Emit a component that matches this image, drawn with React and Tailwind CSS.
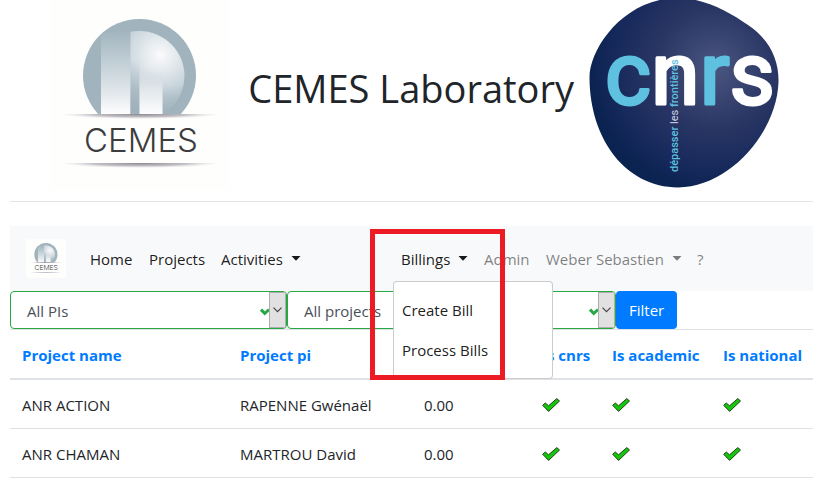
import React from "react";

const projects = [
  { name: "ANR ACTION", pi: "RAPENNE Gwénaël", amount: "0.00" },
  { name: "ANR CHAMAN", pi: "MARTROU David", amount: "0.00" },
];

function CemesLogo({ className }) {
  return (
    <svg viewBox="0 0 180 190" className={className} role="img" aria-label="CEMES logo">
      <defs>
        <radialGradient id="ball" gradientUnits="userSpaceOnUse" cx="110" cy="55" r="60">
          <stop offset="0" stopColor="#fafbfc" />
          <stop offset="0.2" stopColor="#eaeef1" />
          <stop offset="0.6" stopColor="#c6d3da" />
          <stop offset="1" stopColor="#a1b3bd" />
        </radialGradient>
        <linearGradient id="column" x1="0" y1="0" x2="0" y2="1">
          <stop offset="0" stopColor="#a3b5bf" />
          <stop offset="0.4" stopColor="#c3d0d7" />
          <stop offset="0.75" stopColor="#e3e8ec" />
          <stop offset="1" stopColor="#fdfdfe" />
        </linearGradient>
        <linearGradient id="columnShort" x1="0" y1="0" x2="0" y2="1">
          <stop offset="0" stopColor="#d5dee3" stopOpacity="0" />
          <stop offset="0.4" stopColor="#dfe5e9" />
          <stop offset="1" stopColor="#fdfdfe" />
        </linearGradient>
        <linearGradient id="gap" x1="0" y1="0" x2="0" y2="1">
          <stop offset="0" stopColor="#9fb2bc" stopOpacity="0" />
          <stop offset="1" stopColor="#9fb2bc" />
        </linearGradient>
        <radialGradient id="shadow" cx="0.5" cy="0" r="0.5" gradientTransform="scale(1 2)">
          <stop offset="0" stopColor="#88848c" />
          <stop offset="0.6" stopColor="#aaa6ad" stopOpacity="0.7" />
          <stop offset="1" stopColor="#d8d4d8" stopOpacity="0" />
        </radialGradient>
        <clipPath id="dome">
          <rect x="0" y="0" width="180" height="114" />
        </clipPath>
      </defs>
      <rect width="180" height="190" fill="#fefefd" />
      <g clipPath="url(#dome)">
        <circle cx="89.500" cy="75.500" r="56.500" fill="#a1b3bd" />
        <circle cx="89.500" cy="76" r="45" fill="url(#ball)" />
        <path d="M51 34 Q64 30 80.500 32 V114 H51Z" fill="url(#column)" />
        <rect x="80.500" y="60" width="9" height="54" fill="url(#gap)" />
        <path d="M112.500 85 H134 V96 Q127 108 118 114 H112.500Z" fill="url(#gap)" opacity="0.7" />
        <rect x="89.500" y="70" width="23" height="44" fill="url(#columnShort)" />
      </g>
      <rect x="10" y="114" width="160" height="5" fill="url(#shadow)" />
      <text x="34" y="152" fontFamily="Inter, 'Liberation Sans', sans-serif" fontWeight="300" fontSize="33" fill="#3c3c3e">
        CEMES
      </text>
      <rect x="10" y="163" width="160" height="5" fill="url(#shadow)" />
    </svg>
  );
}

function CnrsLogo({ className }) {
  return (
    <svg viewBox="0 0 210 200" className={className} role="img" aria-label="CNRS logo">
      <defs>
        <radialGradient id="navy" gradientUnits="userSpaceOnUse" cx="135" cy="68" r="125">
          <stop offset="0" stopColor="#4b5680" />
          <stop offset="0.45" stopColor="#2b3765" />
          <stop offset="0.85" stopColor="#14285a" />
          <stop offset="1" stopColor="#0b2350" />
        </radialGradient>
      </defs>
      <path
        d="M9.500 78 C9 50 42 0 95 -2 C122 -3 148 11 168 25 C190 40 199 60 198.500 82 C197 132 150 187 98 187.500 C46 187 10 140 9.500 78Z"
        fill="url(#navy)"
      />
      <text
        x="25"
        y="104"
        fontFamily="Roboto, 'Liberation Sans', sans-serif"
        fontSize="88"
        strokeWidth="3"
        strokeLinejoin="round"
        fill="#5fc1e0"
        stroke="#5fc1e0"
      >
        c<tspan fill="#ffffff" stroke="#ffffff">n</tspan>r<tspan fill="#ffffff" stroke="#ffffff">s</tspan>
      </text>
      <text
        transform="translate(98 172) rotate(-90)"
        fontFamily="Roboto, 'Liberation Sans', sans-serif"
        fontSize="11"
        fontWeight="500"
        fill="#5fc1e0"
      >
        dépasser <tspan fill="#d3d4ea" fontWeight="400">les</tspan> frontières
      </text>
    </svg>
  );
}

function Caret() {
  return (
    <svg viewBox="0 0 10 5" className="ml-2 h-[5px] w-[10px]" fill="currentColor" aria-hidden="true">
      <path d="M0.500 0H9.500L5 4.800Z" />
    </svg>
  );
}

function FilterSelect({ label, className }) {
  return (
    <div className={`flex h-[38px] items-center overflow-hidden rounded border border-[#28a745] bg-white ${className}`}>
      <select aria-label={label} className="h-full min-w-0 flex-1 appearance-none bg-transparent pt-[2px] pl-4 text-[15px] text-[#495057] outline-none">
        <option>{label}</option>
      </select>
      <svg viewBox="0 0 9 8" className="mt-1 h-2 w-[9px]" aria-hidden="true">
        <path d="M1 1.500L4.800 5.500L9 1.500" fill="none" stroke="#28a745" strokeWidth="3" />
      </svg>
      <span className="flex h-full w-[17px] items-center justify-center border border-[#adadad] bg-[#e1e1e1]">
        <svg viewBox="0 0 9 6" className="h-[6px] w-[9px]" aria-hidden="true">
          <path d="M0.500 0.700L4.500 4.700L8.500 0.700" fill="none" stroke="#444" strokeWidth="1.200" />
        </svg>
      </span>
    </div>
  );
}

function Tick() {
  return (
    <svg viewBox="0 0 18 14" className="h-[14px] w-[18px]" role="img" aria-label="Yes">
      <path d="M0.700 7.300L3.300 5L6.500 7.800L14.800 0.600L17.500 3L6.600 13.400Z" fill="#16c60c" stroke="#22401a" strokeWidth="1" strokeLinejoin="round" />
    </svg>
  );
}

export default function App() {
  const link = "flex h-10 items-center px-2 whitespace-nowrap";
  const th = "border-t border-b-2 border-[#dee2e6] px-3 pt-[13px] pb-[11px] text-left font-bold whitespace-nowrap text-[#007bff]";
  const td = "border-b border-[#dee2e6] px-3 pt-[13px] pb-[11px] whitespace-nowrap";
  return (
    <div className="bg-white pr-[6px] pl-[10px] font-['Open_Sans','Noto_Sans',sans-serif] text-[15px] leading-6 text-[#212529]">
      <header className="flex items-start border-b border-[#e5e5e5] pb-px pl-10">
        <CemesLogo className="h-[190px] w-[180px] shrink-0" />
        <h1 className="w-[350px] shrink-0 pt-16 pr-[6px] text-right text-[38px] leading-[48px] whitespace-nowrap">CEMES Laboratory</h1>
        <CnrsLogo className="h-[200px] w-[210px] shrink-0" />
      </header>

      <nav className="mt-6 flex h-[65px] items-center bg-[#f8f9fa] pl-4">
        <a href="#home" className="mr-4 bg-[#fefefd]">
          <CemesLogo className="h-[39px] w-10" />
        </a>
        <ul className="flex text-black/90">
          <li className="w-[59px]"><a href="#home" className={link}>Home</a></li>
          <li className="w-[72px]"><a href="#projects" className={link}>Projects</a></li>
          <li className="w-[180px]"><button className={link}>Activities<Caret /></button></li>
          <li className="relative w-[83px]">
            <button className={link} aria-expanded="true">Billings<Caret /></button>
            <div className="absolute top-[42px] left-0 z-10 w-40 rounded border border-black/20 bg-white py-2">
              <a href="#create" className={link}>Create Bill</a>
              <a href="#process" className={link}>Process Bills</a>
            </div>
            <div className="pointer-events-none absolute -top-[10px] -left-[23px] z-20 h-[151px] w-[135px] border-[5px] border-[#ed1c24]" />
          </li>
          <li className="w-[62px] text-black/50"><a href="#admin" className={link}>Admin</a></li>
          <li className="w-[151px] text-black/50"><button className={link}>Weber Sebastien<Caret /></button></li>
          <li className="text-black/50"><a href="#help" className={link}>?</a></li>
        </ul>
      </nav>

      <form className="flex" onSubmit={(e) => e.preventDefault()}>
        <FilterSelect label="All PIs" className="w-[277px]" />
        <FilterSelect label="All projects" className="w-[329px]" />
        <button className="h-[38px] rounded bg-[#007bff] px-[13px] text-white">Filter</button>
      </form>

      <table className="w-full table-fixed border-separate border-spacing-0">
        <colgroup>
          <col className="w-[218px]" />
          <col className="w-[184px]" />
          <col className="w-[118px]" />
          <col className="w-[70px]" />
          <col className="w-[111px]" />
          <col />
        </colgroup>
        <thead>
          <tr>
            <th className={th}>Project name</th>
            <th className={th}>Project pi</th>
            <th className={th}></th>
            <th className={th}>Is cnrs</th>
            <th className={th}>Is academic</th>
            <th className={th}>Is national</th>
          </tr>
        </thead>
        <tbody>
          {projects.map((p) => (
            <tr key={p.name}>
              <td className={td}>{p.name}</td>
              <td className={td}>{p.pi}</td>
              <td className={td}>{p.amount}</td>
              <td className={td}><Tick /></td>
              <td className={td}><Tick /></td>
              <td className={td}><Tick /></td>
            </tr>
          ))}
        </tbody>
      </table>
    </div>
  );
}
